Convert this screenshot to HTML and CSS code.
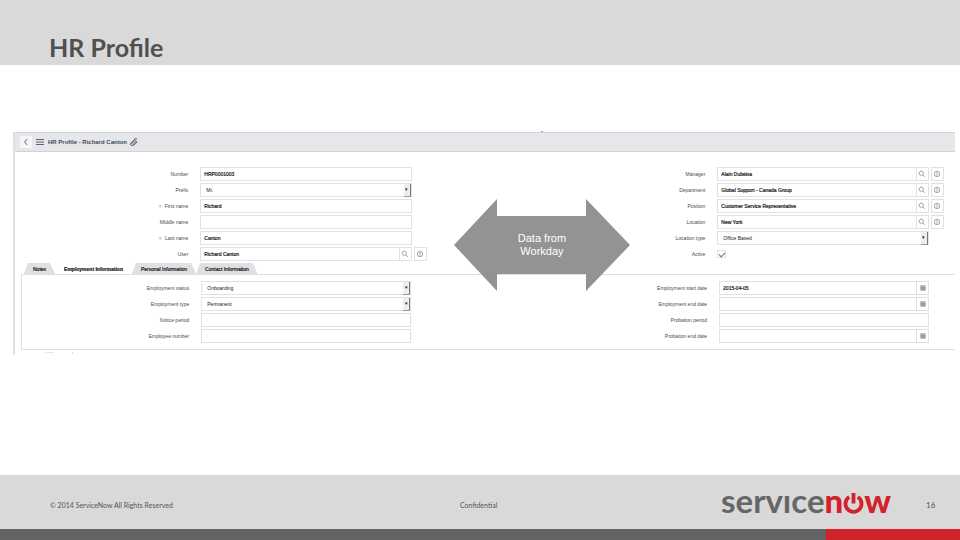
FILE: index.html
```html
<!DOCTYPE html>
<html lang="en">
<head>
<meta charset="utf-8">
<title>HR Profile</title>
<link rel="stylesheet" href="styles.css">
</head>
<body>
<svg class="defs" aria-hidden="true">
  <symbol id="search" viewBox="0 0 8 8"><circle cx="3.3" cy="3.3" r="2.1"/><path d="M5 5l2 2"/></symbol>
  <symbol id="info" viewBox="0 0 8 8"><circle cx="4" cy="4" r="2.7"/><path d="M4 2.2v3.6"/></symbol>
  <symbol id="calendar" viewBox="0 0 8 8"><path class="cal" d="M1.8 1.8h4.4v4.4H1.8zM1.8 3.4h4.4M1.8 4.8h4.4M3.4 3v3M4.8 3v3"/></symbol>
</svg>
<header class="slide-head"><h1>HR Profile</h1></header>
<main>
  <section class="panel">
    <div class="panel-head">
      <button class="back" aria-label="Back"><svg viewBox="0 0 12 12"><path d="M7.2 3L4.6 6l2.6 3"/></svg></button>
      <button class="menu" aria-label="Menu"><svg viewBox="0 0 8 8"><path d="M0 1.5h8M0 4h8M0 6.5h8"/></svg></button>
      <h2>HR Profile - Richard Canton</h2>
      <button class="clip" aria-label="Attachments"><svg viewBox="0 0 9 9"><path d="M1 6.2L5.2 1.8 7 3.4 3 7.8 1.6 6.8 5.6 2.8M4.4 7.8L8 4.2 7 3M5 1l3-.2"/></svg></button>
    </div>
    <div class="columns main-form">
      <div class="fields left">
        <div class="row"><label for="number">Number</label><div class="control"><input id="number" value="HRP0001003"></div></div>
        <div class="row"><label for="prefix">Prefix</label><div class="control pick"><select id="prefix"><option>Mr.</option></select></div></div>
        <div class="row"><label for="first"><span class="req">✳</span>First name</label><div class="control"><input id="first" value="Richard"></div></div>
        <div class="row"><label for="middle">Middle name</label><div class="control"><input id="middle"></div></div>
        <div class="row"><label for="last"><span class="req">✳</span>Last name</label><div class="control"><input id="last" value="Canton"></div></div>
        <div class="row"><label for="user">User</label><div class="control"><input id="user" value="Richard Canton"><button aria-label="Look up user"><svg><use href="#search"/></svg></button></div><button class="more" aria-label="User details"><svg><use href="#info"/></svg></button></div>
      </div>
      <div class="fields right">
        <div class="row"><label for="manager">Manager</label><div class="control"><input id="manager" value="Alain Dubéisa"><button aria-label="Look up manager"><svg><use href="#search"/></svg></button></div><button class="more" aria-label="Manager details"><svg><use href="#info"/></svg></button></div>
        <div class="row"><label for="dept">Department</label><div class="control"><input id="dept" value="Global Support - Canada Group"><button aria-label="Look up department"><svg><use href="#search"/></svg></button></div><button class="more" aria-label="Department details"><svg><use href="#info"/></svg></button></div>
        <div class="row"><label for="position">Position</label><div class="control"><input id="position" value="Customer Service Representative"><button aria-label="Look up position"><svg><use href="#search"/></svg></button></div><button class="more" aria-label="Position details"><svg><use href="#info"/></svg></button></div>
        <div class="row"><label for="location">Location</label><div class="control"><input id="location" value="New York"><button aria-label="Look up location"><svg><use href="#search"/></svg></button></div><button class="more" aria-label="Location details"><svg><use href="#info"/></svg></button></div>
        <div class="row"><label for="loctype">Location type</label><div class="control pick"><select id="loctype"><option>Office Based</option></select></div></div>
        <div class="row"><label for="active">Active</label><div class="check"><input type="checkbox" id="active" checked></div></div>
      </div>
    </div>
    <nav class="tabs">
      <button>Notes</button><button class="current">Employment Information</button><button>Personal Information</button><button>Contact Information</button>
    </nav>
    <div class="columns tab-body">
      <div class="fields left">
        <div class="row"><label for="status">Employment status</label><div class="control pick"><select id="status"><option>Onboarding</option></select></div></div>
        <div class="row"><label for="type">Employment type</label><div class="control pick"><select id="type"><option>Permanent</option></select></div></div>
        <div class="row"><label for="notice">Notice period</label><div class="control"><input id="notice"></div></div>
        <div class="row"><label for="empno">Employee number</label><div class="control"><input id="empno"></div></div>
      </div>
      <div class="fields right">
        <div class="row"><label for="start">Employment start date</label><div class="control"><input id="start" value="2015-04-05"><button aria-label="Pick start date"><svg><use href="#calendar"/></svg></button></div></div>
        <div class="row"><label for="end">Employment end date</label><div class="control"><input id="end"><button aria-label="Pick end date"><svg><use href="#calendar"/></svg></button></div></div>
        <div class="row"><label for="probation">Probation period</label><div class="control"><input id="probation"></div></div>
        <div class="row"><label for="probend">Probation end date</label><div class="control"><input id="probend"><button aria-label="Pick probation end date"><svg><use href="#calendar"/></svg></button></div></div>
      </div>
    </div>
    <div class="arrow">
      <svg viewBox="0 0 176 92"><path d="M0 46L43 0V17H132V0L176 46 132 92V75H43V92z"/></svg>
      <p>Data from<br>Workday</p>
    </div>
  </section>
</main>
<footer>
  <div class="foot">
    <span class="rights">© 2014 ServiceNow All Rights Reserved</span>
    <span class="conf">Confidential</span>
    <div class="logo" role="img" aria-label="servicenow"><span>servıce</span><b>n</b><svg viewBox="0 0 22 22"><path d="M6.5 4.2A8.4 8.4 0 1 0 15.5 4.2M11 0v11"/></svg><b>w</b></div>
    <span class="page">16</span>
  </div>
  <div class="stripe"></div>
</footer>
</body>
</html>
```
FILE: styles.css
```css
* { box-sizing: border-box; }
body {
  margin: 0;
  min-height: 100vh;
  display: flex;
  flex-direction: column;
  background: #fff;
  font-family: "Liberation Sans", sans-serif;
}
h1, h2, p { margin: 0; }
button, input, select { font: inherit; color: inherit; margin: 0; padding: 0; border: 0; background: none; border-radius: 0; }
svg { display: block; fill: none; }
.defs { position: absolute; width: 0; height: 0; }

.slide-head { background: #d9d9d9; height: 65px; padding: 32px 49px 0; }
h1 { font: bold 25px/30px Lato, sans-serif; color: #505050; }

main { flex: 1; padding: 67px 5px 0 13px; }
.panel {
  position: relative;
  border-left: 2px solid #dfe0e2;
  font-size: 5px;
  line-height: 8px;
  color: #444c58;
}
.panel::before {
  content: "";
  position: absolute;
  left: 56%;
  top: -1px;
  width: 2px;
  height: 1px;
  background: #999;
}
.panel-head {
  display: flex;
  align-items: center;
  height: 20px;
  padding-left: 5px;
  background: #e6e7ea;
  border-top: 1px solid #d2d3d5;
  border-bottom: 1px solid #d2d3d5;
}
.panel-head svg { stroke: #59616e; stroke-width: 1; }
.back, .back svg { width: 12px; height: 12px; }
.back { background: #f5f6f8; }
.menu { margin: 0 4px 0 4px; }
.menu svg { width: 8px; height: 8px; }
.clip { margin-left: 2px; }
.clip svg { width: 9px; height: 9px; }
h2 { font-size: 6px; line-height: 10px; color: #3f4754; }

.columns { display: grid; grid-template-columns: 1fr 1fr; }
.main-form { padding: 15px 0 3px; }
.fields { display: grid; gap: 3px; }
.row { display: grid; column-gap: 2px; height: 13px; }
.left .row { grid-template-columns: 39% 45% 13px; }
.right .row { grid-template-columns: 49% 45% 13px; }
.tab-body .left .row { grid-template-columns: 38% 45% 13px; }
label { text-align: right; padding-right: 10px; line-height: 14px; white-space: nowrap; }
.req { color: #a8adb5; margin-right: 3px; }
.control { display: flex; border: 1px solid #dfe1e4; background: #fff; color: #15181d; }
.control input { flex: 1; min-width: 0; padding: 0 3px; -webkit-text-stroke: 0.2px; }
.control button { width: 12px; border-left: 1px solid #dfe1e4; }
.control svg, .more svg { width: 8px; height: 8px; margin: auto; stroke: #8a9098; stroke-width: 0.8; }
.cal { fill: #d0d2d5; }
.more { border: 1px solid #dfe1e4; }
.pick { position: relative; }
.pick select { flex: 1; min-width: 0; padding: 0 5px; appearance: none; }
.pick::after {
  content: "▾";
  position: absolute;
  right: 0;
  top: 0;
  width: 6px;
  height: 12px;
  line-height: 11px;
  text-align: center;
  background: #eee;
  border-right: 1px solid #777;
  border-bottom: 1px solid #999;
}
.check { display: flex; align-items: center; }
.check input {
  appearance: none;
  width: 9px;
  height: 8px;
  border: 1px solid #dfe1e4;
  display: grid;
  place-items: center;
}
.check input::before { content: ""; width: 5px; height: 3px; border-left: 1px solid #4f86a8; border-bottom: 1px solid #4f86a8; rotate: -45deg; }

.tabs { display: flex; padding-left: 9px; }
.tabs button {
  height: 11px;
  padding: 0 9px;
  background: #dfe0e2;
  clip-path: polygon(4px 0, calc(100% - 5px) 0, 100% 100%, 0 100%);
  color: #15181d;
  -webkit-text-stroke: 0.2px;
  white-space: nowrap;
}
.tabs .current { background: #fff; font-weight: bold; }
.tab-body { margin-left: 6px; padding: 6px 0 7px; border: 1px solid #dfe0e2; border-right: 0; }
.panel::after {
  content: "";
  display: block;
  width: 28px;
  height: 5px;
  margin-left: 30px;
  background: linear-gradient(#ddd, #ddd) 100% 2px / 1px 2px no-repeat, linear-gradient(#e8e8e8, #e8e8e8) 0 2px / 9px 1px no-repeat;
}

.arrow { position: absolute; left: 46.7%; top: 67px; width: 176px; display: grid; place-items: center; }
.arrow svg, .arrow p { grid-area: 1 / 1; }
.arrow svg { width: 100%; }
.arrow path { fill: #8d8d8d; fill-opacity: 0.95; }
.arrow p { color: #fff; font-size: 11px; line-height: 13px; text-align: center; }

.foot {
  display: grid;
  grid-template-columns: minmax(0, 410fr) minmax(0, 261fr) minmax(0, 179fr) minmax(0, 60fr);
  align-items: center;
  height: 54px;
  padding: 5px 0 0 50px;
  background: #d9d9d9;
  font: 7px/10px Lato, sans-serif;
  color: #555;
}
.page { padding-left: 26px; font-size: 8px; }
.logo { display: flex; align-items: center; font: bold 33px/36px Lato, sans-serif; color: #666; margin-top: -10px; }
.logo b { color: #d2232a; }
.logo svg { width: 21px; height: 21px; margin-top: 8px; stroke: #d2232a; stroke-width: 4; }
.stripe { height: 11px; background: linear-gradient(90deg, #646464 86%, #d2232a 86%); }
```
